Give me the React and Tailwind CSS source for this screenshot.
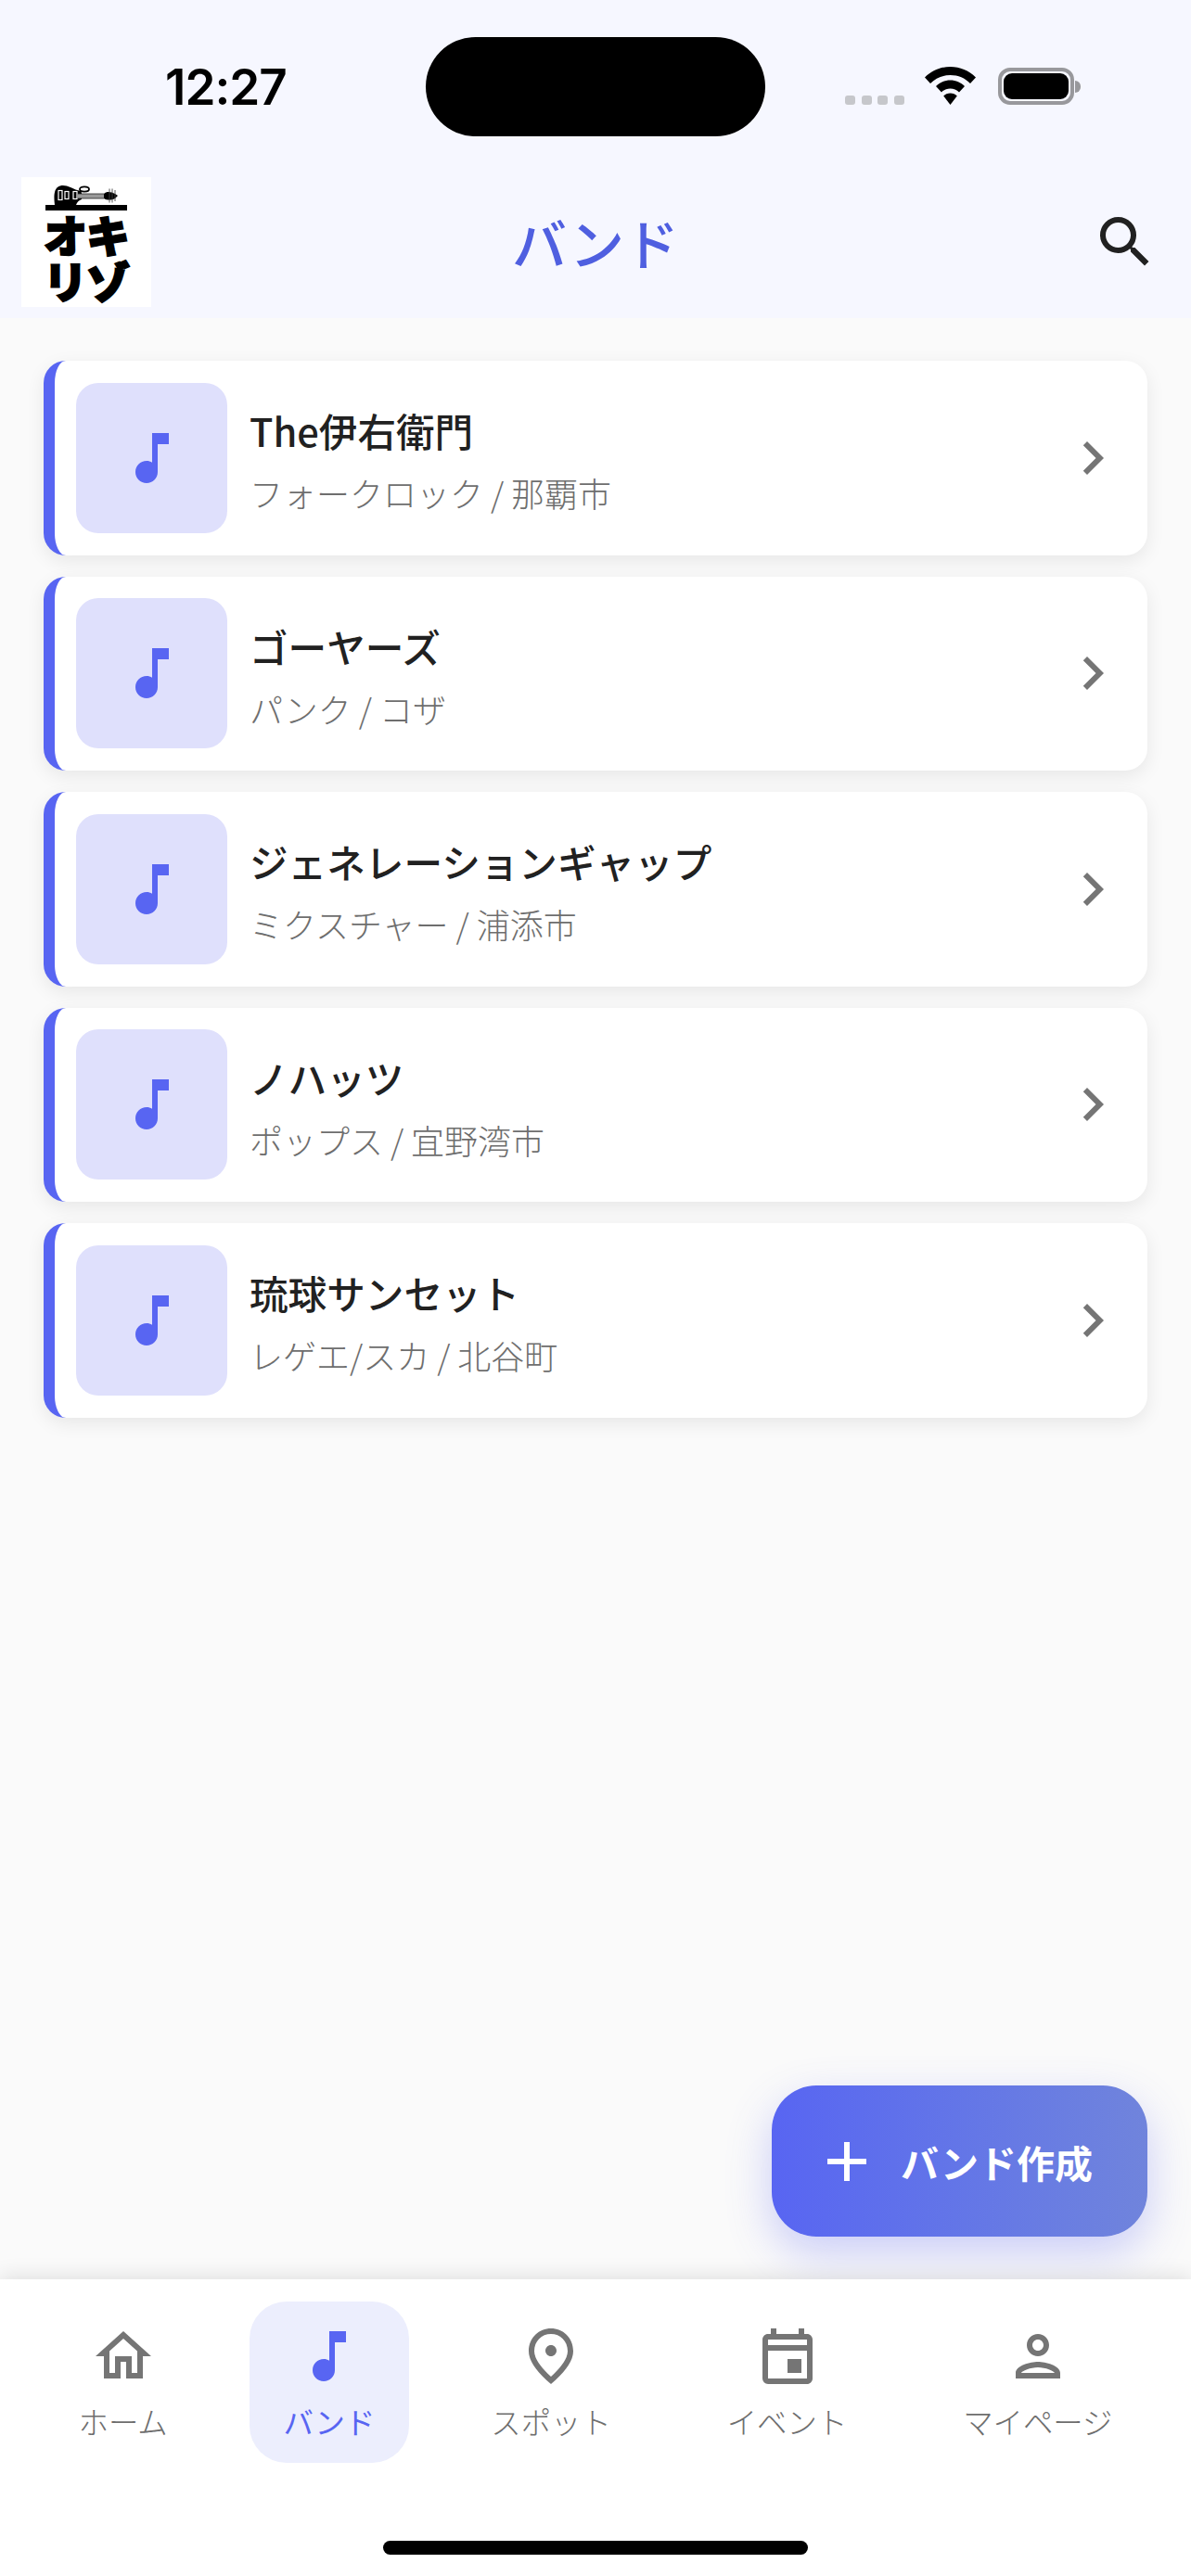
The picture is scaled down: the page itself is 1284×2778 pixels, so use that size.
import React from "react";
import {
  MdMusicNote, MdSearch, MdChevronRight, MdAdd, MdOutlineHome, MdOutlinePlace, MdOutlineEvent, MdOutlinePerson,
} from "react-icons/md";

const bands = [
  ["The伊右衛門", "フォークロック / 那覇市"],
  ["ゴーヤーズ", "パンク / コザ"],
  ["ジェネレーションギャップ", "ミクスチャー / 浦添市"],
  ["ノハッツ", "ポップス / 宜野湾市"],
  ["琉球サンセット", "レゲエ/スカ / 北谷町"],
];

const nav = [
  ["ホーム", MdOutlineHome],
  ["バンド", MdMusicNote, true],
  ["スポット", MdOutlinePlace],
  ["イベント", MdOutlineEvent],
  ["マイページ", MdOutlinePerson],
];

function Guitar() {
  return (
    <svg viewBox="0 0 70 21" className="w-[70px] h-[21px] block">
      <ellipse cx="33" cy="4" rx="5" ry="2.6" fill="#fff" stroke="#000" strokeWidth="1.8" />
      <path d="M1 21 C0 13 0 5 4 2 C8 -1 13 0 18 2 C22 4 25 5 29 6 L30 8 L30 15 C27 16 25 18 24 21 Z" fill="#000" />
      <rect x="26" y="9" width="28" height="5" fill="#999" />
      <path d="M26 9 H54 M26 14 H54" stroke="#222" strokeWidth="0.8" />
      <rect x="5" y="5.5" width="4" height="10" fill="#000" stroke="#fff" strokeWidth="1.2" />
      <rect x="12" y="6.5" width="4" height="8" fill="#000" stroke="#fff" strokeWidth="1.2" />
      <rect x="21" y="6.5" width="4" height="8" fill="#000" stroke="#fff" strokeWidth="1.2" />
      <path d="M54 9 C57 6 62 7 66 9 L69 11 L66 14 C62 16 57 16 54 14 Z" fill="#000" />
      <path d="M60 3.5 V18.5 M63 3.5 V18.5 M66 5 V17" stroke="#444" strokeWidth="0.9" />
    </svg>
  );
}

function Logo() {
  return (
    <div className="w-[140px] h-[140px] bg-white flex flex-col items-center pt-[9px] text-black">
      <Guitar />
      <div className="w-[88px] h-[6px] bg-black shrink-0" />
      <div className="text-[47px] leading-[50px] font-black tracking-[-1px] whitespace-nowrap [-webkit-text-stroke:2px_black]">オキ</div>
      <div className="text-[47px] leading-[50px] font-black tracking-[-1px] whitespace-nowrap [-webkit-text-stroke:2px_black]">リゾ</div>
    </div>
  );
}

function Wifi() {
  return (
    <svg viewBox="0 0 55 41" className="w-[55px] h-[41px] block">
      <path d="M27.5 0 C38 0 47.5 4 55 11.5 L49 18 C43.5 12.2 36 9 27.5 9 C19 9 11.5 12.2 6 18 L0 11.5 C7.5 4 17 0 27.5 0 Z" fill="#000" />
      <path d="M27.5 14.5 C33.5 14.5 39 17 43 21 L37 27.5 C34.5 24.8 31 23.4 27.5 23.4 C24 23.4 20.5 24.8 18 27.5 L12 21 C16 17 21.5 14.5 27.5 14.5 Z" fill="#000" />
      <path d="M27.5 28.5 C30.5 28.5 33 29.5 34.8 31.5 L27.5 41 L20.2 31.5 C22 29.5 24.5 28.5 27.5 28.5 Z" fill="#000" />
    </svg>
  );
}

function StatusBar() {
  return (
    <div className="h-[191px] flex items-start pt-[40px]">
      <div className="w-[459px] shrink-0 pl-[178px] pt-[24px] font-['Inter',sans-serif] text-[53px] leading-[60px] font-semibold text-black tracking-[-1px]">12:27</div>
      <div className="w-[366px] h-[107px] shrink-0 rounded-full bg-black" />
      <div className="flex items-end pl-[86px] pt-[32px] h-[73px]">
        <div className="flex gap-[6.5px]">
          {[0, 1, 2, 3].map((i) => (
            <div key={i} className="w-[11px] h-[10px] rounded-[3px] bg-[#c6c7cb]" />
          ))}
        </div>
        <div className="ml-[22px]"><Wifi /></div>
        <div className="ml-[24px] flex items-center">
          <div className="w-[82px] h-[40px] rounded-[13px] border-[4px] border-[#98989c] p-[2px]">
            <div className="w-full h-full rounded-[9px] bg-black" />
          </div>
          <div className="w-[6px] h-[13px] rounded-r-[6px] bg-[#98989c] ml-[1px]" />
        </div>
      </div>
    </div>
  );
}

function Header() {
  return (
    <div className="h-[152px] px-[23px] grid grid-cols-[1fr_auto_1fr] items-start">
      <Logo />
      <div className="text-center text-[59px] leading-[140px] font-medium text-[#4f5fe0]">バンド</div>
      <MdSearch className="w-[72px] h-[72px] mt-[34px] mr-[12px] justify-self-end text-[#212121]" />
    </div>
  );
}

function BandCard({ title, sub }) {
  return (
    <div className="h-[209.5px] bg-white rounded-[24px] border-l-[12px] border-[#5865f2] shadow-[0_6px_20px_rgba(0,0,0,0.08)] flex items-center pl-[23px] pr-[23px]">
      <div className="w-[163px] h-[162px] shrink-0 rounded-[24px] bg-[#dfe0fc] flex items-center justify-center">
        <MdMusicNote className="w-[72px] h-[72px] text-[#5865f2]" />
      </div>
      <div className="flex-1 min-w-0 pl-[24px] pt-[5px] flex flex-col">
        <div className="text-[41.6px] leading-[56px] font-medium text-[#212121] whitespace-nowrap">{title}</div>
        <div className="text-[36px] leading-[50px] mt-[14px] font-light text-[#6e6e6e] whitespace-nowrap">{sub}</div>
      </div>
      <MdChevronRight className="w-[72px] h-[72px] shrink-0 text-[#757575]" />
    </div>
  );
}

function Fab() {
  return (
    <div className="absolute right-[47px] bottom-[46px] w-[405px] h-[163px] rounded-[48px] bg-gradient-to-r from-[#5865f2] to-[#7084dc] shadow-[0_18px_48px_rgba(88,101,242,0.3)] flex items-center pl-[45px] text-white">
      <MdAdd className="w-[72px] h-[72px] shrink-0" />
      <span className="ml-[22px] text-[41px] leading-[56px] font-bold whitespace-nowrap">バンド作成</span>
    </div>
  );
}

function NavBar() {
  return (
    <div className="relative z-10 h-[320px] bg-white shadow-[0_-4px_20px_rgba(0,0,0,0.1)] pt-[24px] flex flex-col">
      <div className="flex justify-between px-[48px]">
        {nav.map(([label, Icon, active]) => (
          <div
            key={label}
            className={
              "h-[174px] px-[36.5px] flex flex-col items-center pt-[23px] rounded-[40px] " +
              (active ? "bg-[#eceefd] text-[#5865f2]" : "text-[#6e6e6e]")
            }
          >
            <Icon className={"w-[72px] h-[72px] shrink-0 " + (active ? "" : "text-[#757575]")} />
            <span className={"text-[32.4px] leading-[46px] mt-[11px] whitespace-nowrap " + (active ? "font-normal" : "font-light")}>{label}</span>
          </div>
        ))}
      </div>
      <div className="mt-[84px] mx-auto w-[458px] h-[15px] rounded-full bg-black" />
    </div>
  );
}

export default function App() {
  return (
    <div className="w-[1284px] h-[2778px] bg-[#fafafa] flex flex-col overflow-hidden font-['Noto_Sans_CJK_JP','Noto_Sans',sans-serif]">
      <div className="bg-[#f6f7ff]">
        <StatusBar />
        <Header />
      </div>
      <div className="flex-1 relative px-[47px] pt-[46px] flex flex-col gap-[23px]">
        {bands.map(([t, s]) => (
          <BandCard key={t} title={t} sub={s} />
        ))}
        <Fab />
      </div>
      <NavBar />
    </div>
  );
}
